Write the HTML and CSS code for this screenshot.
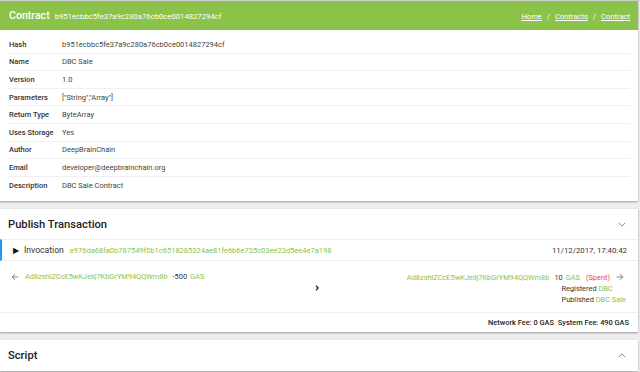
FILE: index.html
```html
<!DOCTYPE html>
<html>
<head>
<meta charset="utf-8">
<link rel="stylesheet" href="styles.css">
</head>
<body>
<div class="page">
  <section class="card">
    <header class="topbar">
      <div class="title"><span class="title-main">Contract</span><span class="title-hash">b951ecbbc5fe37a9c280a76cb0ce0014827294cf</span></div>
      <nav class="crumbs"><a>Home</a><span class="sep">/</span><a>Contracts</a><span class="sep">/</span><a>Contract</a></nav>
    </header>
    <div class="props">
      <div class="row"><span class="k">Hash</span><span class="v">b951ecbbc5fe37a9c280a76cb0ce0014827294cf</span></div>
      <div class="row"><span class="k">Name</span><span class="v">DBC Sale</span></div>
      <div class="row"><span class="k">Version</span><span class="v">1.0</span></div>
      <div class="row"><span class="k">Parameters</span><span class="v">["String","Array"]</span></div>
      <div class="row"><span class="k">Return Type</span><span class="v">ByteArray</span></div>
      <div class="row"><span class="k">Uses Storage</span><span class="v">Yes</span></div>
      <div class="row"><span class="k">Author</span><span class="v">DeepBrainChain</span></div>
      <div class="row"><span class="k">Email</span><span class="v">developer@deepbrainchain.org</span></div>
      <div class="row last"><span class="k">Description</span><span class="v">DBC Sale Contract</span></div>
    </div>
  </section>

  <section class="card tx">
    <div class="panel-head"><span>Publish Transaction</span>
      <svg class="chev" viewBox="0 0 10 6" width="8" height="5"><path d="M1 1l4 4 4-4" fill="none" stroke="#777" stroke-width="1.1"/></svg>
    </div>
    <div class="inv">
      <div class="inv-left"><span class="tri">&#9654;</span><span class="inv-name">Invocation</span><span class="green">e976da68fa0b787549f0b1c6518285324ae81fe6b6e735c03ee23d5ee4e7a198</span></div>
      <span class="date">11/12/2017, 17:40:42</span>
    </div>
    <div class="flow">
      <div class="side left">
        <svg class="arr" viewBox="0 0 10 10" width="8" height="8"><path d="M9 5H1.5M5 1.5L1.5 5 5 8.5" fill="none" stroke="#666" stroke-width="1"/></svg>
        <span class="green">Ad8zshiZCcE5wKJeiij7KbGrYM94QQWm8b</span><span class="amt">-500</span><span class="green">GAS</span>
      </div>
      <div class="mid"><svg viewBox="0 0 6 8" width="5" height="6"><path d="M1 1l3 3-3 3" fill="none" stroke="#222" stroke-width="1.6"/></svg></div>
      <div class="side right">
        <div class="out"><span class="green">Ad8zshiZCcE5wKJeiij7KbGrYM94QQWm8b</span><span class="amt">10</span><span class="green">GAS</span><span class="red">(Spent)</span>
          <svg class="arr" viewBox="0 0 10 10" width="8" height="8"><path d="M1 5h7.5M5 1.5L8.5 5 5 8.5" fill="none" stroke="#666" stroke-width="1"/></svg>
        </div>
        <div class="notes">
          <div class="note">Registered <span class="green">DBC</span></div>
          <div class="note">Published <span class="green">DBC Sale</span></div>
        </div>
      </div>
    </div>
    <div class="fees"><span>Network Fee: 0 GAS</span><span>System Fee: 490 GAS</span></div>
  </section>

  <section class="card script">
    <div class="panel-head"><span>Script</span>
      <svg class="chev" viewBox="0 0 10 6" width="8" height="5"><path d="M1 5l4-4 4 4" fill="none" stroke="#777" stroke-width="1.1"/></svg>
    </div>
  </section>
</div>
</body>
</html>
```

FILE: styles.css
```css
html, body { margin: 0; padding: 0; }
body {
  background: #eeeeee;
  font-family: Roboto, "Liberation Sans", Arial, sans-serif;
  color: #333;
  border-top: 1px solid #cfcfcf;
  overflow: hidden;
  height: 371px;
}
.page { width: 638px; }
.card {
  background: #fff;
  box-shadow: 0 1px 2px rgba(0,0,0,0.35);
}
.topbar {
  background: #8bc34a;
  height: 29px;
  display: flex;
  align-items: center;
  justify-content: space-between;
  padding: 0 8px 0 9px;
  color: #fff;
}
.title { display: flex; align-items: baseline; gap: 5px; }
.title-main { font-size: 10.6px; font-weight: 500; }
.title-hash { font-size: 7.7px; }
.crumbs { font-size: 7.6px; display: flex; gap: 5px; margin-top: 1px; }
.crumbs a { text-decoration: underline; color: #fff; }
.props { padding: 6px 8px 7px 8px; }
.row {
  height: 17.6px;
  display: flex;
  align-items: center;
  border-bottom: 1px solid #f0f0f0;
  box-sizing: border-box;
  font-size: 7.5px;
}
.row.last { border-bottom: none; }
.k { width: 53px; padding-left: 1px; font-weight: 500; color: #333; }
.v { color: #444; }
.tx { margin-top: 8px; }
.panel-head {
  height: 30px;
  display: flex;
  align-items: center;
  justify-content: space-between;
  padding: 0 12px 0 8px;
  font-size: 11.2px;
  font-weight: 500;
  color: #222;
}
.inv {
  height: 22px;
  box-sizing: border-box;
  border-top: 1px solid #eee;
  border-bottom: 1px solid #eee;
  border-left: 2px solid #2196f3;
  display: flex;
  align-items: center;
  justify-content: space-between;
  padding: 0 11px 0 11px;
  font-size: 7.5px;
}
.inv-left { display: flex; align-items: center; }
.tri { font-size: 8px; color: #111; margin-right: 5px; }
.inv-name { font-size: 8.6px; color: #333; margin-right: 6px; }
.date { font-size: 7.8px; color: #333; }
.green { color: #8bc34a; }
.red { color: #f44336; }
.flow {
  display: flex;
  box-sizing: border-box;
  padding: 11px 14px 0 11px;
  font-size: 7.4px;
  border-bottom: 1px solid #eee;
  height: 52px;
}
.side { flex: 1; }
.side.left { display: flex; align-items: center; align-self: flex-start; }
.side.left .arr { margin-right: 6px; }
.amt { color: #333; margin: 0 3px 0 5px; }
.mid { width: 10px; display: flex; align-items: center; justify-content: center; padding-bottom: 9px; }
.side.right { display: flex; flex-direction: column; align-items: flex-end; }
.out { display: flex; align-items: center; height: 10px; }
.out .red { margin-left: 6px; }
.out .arr { margin-left: 6px; }
.notes { margin-top: 1px; margin-right: -2px; }
.note { color: #333; line-height: 11px; }
.fees {
  display: flex;
  justify-content: flex-end;
  gap: 4px;
  padding: 0 9px;
  height: 19px;
  align-items: center;
  font-size: 7.4px;
  font-weight: 500;
  color: #222;
}
.script { margin-top: 8px; }
.script .panel-head { height: 31px; }
```
